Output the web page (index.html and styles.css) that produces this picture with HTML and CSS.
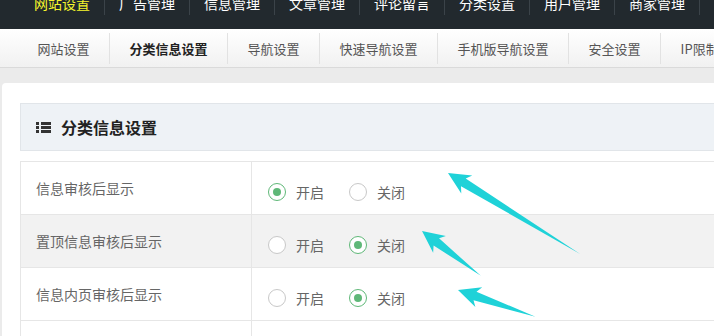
FILE: index.html
```html
<!DOCTYPE html>
<html lang="zh-CN">
<head>
    <meta charset="UTF-8">
    <meta name="viewport" content="width=device-width, initial-scale=1.0">
    <title>分类信息设置</title>
    <link rel="stylesheet" href="styles.css">
</head>
<body>

<!-- 顶部主导航 -->
<div class="topbar">
    <ul class="topnav">
        <li class="active">网站设置</li>
        <li>广告管理</li>
        <li>信息管理</li>
        <li>文章管理</li>
        <li>评论留言</li>
        <li>分类设置</li>
        <li>用户管理</li>
        <li>商家管理</li>
        <li>微信设置</li>
    </ul>
</div>

<!-- 二级导航 -->
<div class="subbar">
    <ul class="subnav">
        <li>网站设置</li>
        <li class="active">分类信息设置</li>
        <li>导航设置</li>
        <li>快速导航设置</li>
        <li>手机版导航设置</li>
        <li>安全设置</li>
        <li>IP限制设置</li>
    </ul>
</div>

<div class="main">
    <div class="panel-head">
        <svg class="list-icon" width="15" height="11" viewBox="0 0 15 11">
            <rect x="0" y="0" width="3" height="3"/>
            <rect x="0" y="4" width="3" height="3"/>
            <rect x="0" y="8" width="3" height="3"/>
            <rect x="5" y="0" width="10" height="3"/>
            <rect x="5" y="4" width="10" height="3"/>
            <rect x="5" y="8" width="10" height="3"/>
        </svg>
        <h2>分类信息设置</h2>
    </div>

    <div class="form-table">
        <div class="row">
            <div class="label">信息审核后显示</div>
            <div class="options">
                <span class="radio checked"><i></i>开启</span>
                <span class="radio"><i></i>关闭</span>
            </div>
        </div>
        <div class="row alt">
            <div class="label">置顶信息审核后显示</div>
            <div class="options">
                <span class="radio"><i></i>开启</span>
                <span class="radio checked"><i></i>关闭</span>
            </div>
        </div>
        <div class="row">
            <div class="label">信息内页审核后显示</div>
            <div class="options">
                <span class="radio"><i></i>开启</span>
                <span class="radio checked"><i></i>关闭</span>
            </div>
        </div>
        <div class="row">
            <div class="label"></div>
            <div class="options"></div>
        </div>
    </div>
</div>

<!-- 标注箭头 -->
<svg class="marks" width="714" height="336" viewBox="0 0 714 336">
    <polygon transform="translate(448 173) rotate(31.5)" points="0,0 22,-10.5 18,-4.5 155,0 18,4.5 22,10.5"/>
    <polygon transform="translate(422 231) rotate(37.3)" points="0,0 22,-10.5 18,-4.5 74,0 18,4.5 22,10.5"/>
    <polygon transform="translate(458 290) rotate(19.1)" points="0,0 22,-10.5 18,-4.5 82,0 18,4.5 22,10.5"/>
</svg>

</body>
</html>
```

FILE: styles.css
```css
body {
    margin: 0;
    position: relative;
    overflow: hidden;
    font-family: "Noto Sans CJK SC", "Microsoft YaHei", sans-serif;
    background-color: #ebebeb;
}
ul {
    margin: 0;
    padding: 0;
    list-style: none;
}
.topbar {
    height: 29px;
    background-color: #22292e;
    overflow: hidden;
}
.topnav {
    display: flex;
    margin: -8px 0 0 20px;
}
.topnav li {
    flex-shrink: 0;
    padding: 0 14px;
    line-height: 23px;
    font-size: 14px;
    color: #fff;
    border-right: 1px solid #3b4349;
}
.topnav li.active {
    color: #f5f52c;
}
.subbar {
    height: 38px;
    background: linear-gradient(#fff, #f1f1f1);
    border-bottom: 1px solid #dadada;
    display: flex;
    align-items: center;
    padding-left: 18px;
    overflow: hidden;
}
.subnav {
    display: flex;
}
.subnav li {
    flex-shrink: 0;
    padding: 0 19.5px;
    line-height: 31px;
    font-size: 13px;
    color: #555;
    border-right: 1px solid #e2e2e2;
}
.subnav li.active {
    color: #222;
    font-weight: bold;
}
.main {
    width: 1200px;
    margin: 15px 0 0 2px;
    padding: 20px 18px;
    background-color: #fff;
    border-radius: 4px 0 0 0;
}
.panel-head {
    height: 46px;
    display: flex;
    align-items: center;
    padding-left: 15px;
    background-color: #eef2f6;
    border: 1px solid #e1e5e9;
}
.list-icon {
    fill: #333;
    margin-right: 10px;
}
.panel-head h2 {
    margin: 0;
    font-size: 16px;
    font-weight: bold;
    color: #222;
}
.form-table {
    margin-top: 10px;
    border-top: 1px solid #e6e6e6;
    border-left: 1px solid #e6e6e6;
}
.row {
    display: grid;
    grid-template-columns: 231px 1fr;
    height: 53px;
    box-sizing: border-box;
    border-bottom: 1px solid #e6e6e6;
}
.row.alt {
    background-color: #f2f2f2;
}
.label {
    display: flex;
    align-items: center;
    padding-left: 15px;
    font-size: 14px;
    color: #666;
    border-right: 1px solid #e6e6e6;
}
.options {
    display: flex;
    align-items: center;
    padding: 8px 0 0 16px;
}
.radio {
    display: flex;
    align-items: center;
    margin-right: 25px;
    font-size: 14px;
    color: #666;
}
.radio i {
    position: relative;
    width: 18px;
    height: 18px;
    box-sizing: border-box;
    margin-right: 10px;
    border: 1.5px solid #c8c8c8;
    border-radius: 50%;
    background-color: #fff;
}
.radio.checked i {
    border-color: #5fb878;
}
.radio.checked i::after {
    content: "";
    position: absolute;
    left: 3.5px;
    top: 3.5px;
    width: 8px;
    height: 8px;
    border-radius: 50%;
    background-color: #5fb878;
}
.marks {
    position: absolute;
    left: 0;
    top: 0;
    pointer-events: none;
    fill: #1fd2d8;
}
```
